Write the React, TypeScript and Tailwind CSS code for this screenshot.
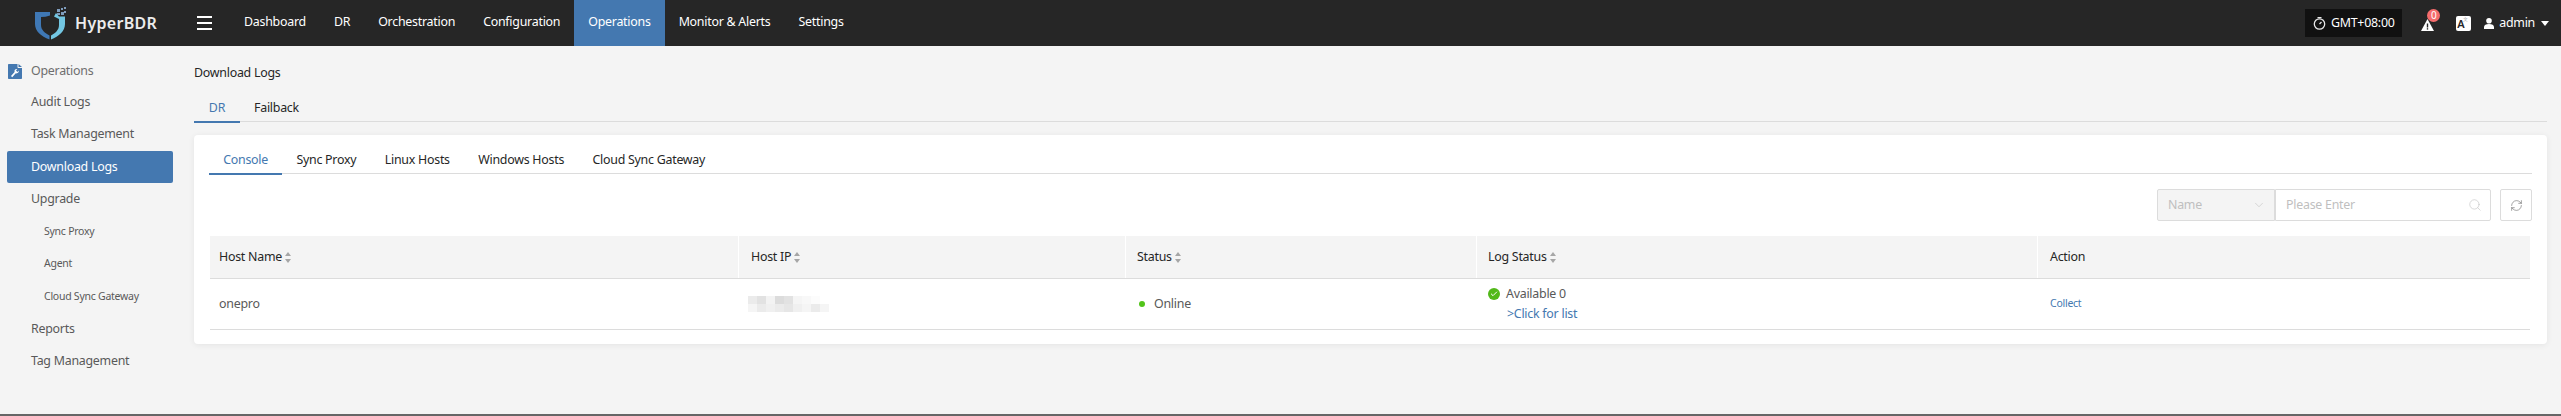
import { ReactNode } from "react"
import { ChevronDown, Search, RefreshCw, Check } from "lucide-react"

const NAV = ["Dashboard", "DR", "Orchestration", "Configuration", "Operations", "Monitor & Alerts", "Settings"]
const SIDE = [
  { label: "Audit Logs" },
  { label: "Task Management" },
  { label: "Download Logs", active: true },
  { label: "Upgrade" },
  { label: "Sync Proxy", sub: true },
  { label: "Agent", sub: true },
  { label: "Cloud Sync Gateway", sub: true },
  { label: "Reports" },
  { label: "Tag Management" },
]
const INNER = ["Console", "Sync Proxy", "Linux Hosts", "Windows Hosts", "Cloud Sync Gateway"]
const BLUR = ["#ebebeb", "#e2e2e2", "#f3f3f3", "#dcdcdc", "#e2e2e2", "#f5f5f5", "#f8f8f8", "#fcfcfc", "#ffffff", "#f5f5f5", "#ebebeb", "#f0f0f0", "#ebebeb", "#e6e6e6", "#f0f0f0", "#f5f5f5", "#ebebeb", "#f5f5f5"]

const Logo = () => (
  <svg width="31" height="33" viewBox="0 0 31 33" className="shrink-0">
    <path d="M0 5 H15 V8.5 C12 9.5 9 10 6 10 V18 C6 23 10 26 14.5 28.5 V32.5 C6 29.5 0 24 0 17 Z" fill="#3f78b5" />
    <path d="M21 6 L24 9.5 H30 V17 C30 24 24 29.5 16 32.5 V28.5 C20.5 26 24 23 24 18 V12 L19 9.5 Z" fill="#72c6e2" />
    <g fill="#7f9dbd">
      <rect x="22" y="2" width="3" height="3" />
      <rect x="26" y="5" width="3" height="3" />
      <rect x="22" y="6" width="3" height="2" />
      <rect x="29" y="0" width="2" height="2" />
      <rect x="26" y="1" width="2" height="2" />
      <rect x="29" y="4" width="2" height="2" />
    </g>
  </svg>
)

const Sort = () => (
  <svg width="6" height="11" viewBox="0 0 6 11" className="ml-[3px] shrink-0" fill="#a6a6a6">
    <path d="M3 0 L6 4 H0 Z" />
    <path d="M3 11 L0 7 H6 Z" />
  </svg>
)

const Th = ({ width, children, sort = true, last = false, pad = "pl-[12px]" }: { width: string; children: ReactNode; sort?: boolean; last?: boolean; pad?: string }) => (
  <div className={`flex h-full items-center ${pad} ${width} ${last ? "flex-1" : "border-r border-white"} text-[#262626]`}>
    {children}
    {sort && <Sort />}
  </div>
)

export default function App() {
  return (
    <div className="flex h-[416px] w-[2561px] flex-col overflow-hidden border-b-2 border-[#666666] bg-[#f4f4f4] font-['Noto_Sans',sans-serif] text-[12.4px] tracking-[-0.25px] text-[#595959]">
      <header className="flex h-[46px] shrink-0 items-center bg-[#262626] text-white">
        <div className="ml-[35px] flex w-[145px] items-center">
          <Logo />
          <span className="ml-[9px] text-[16px] font-semibold tracking-[0.3px] text-[#ececec]">HyperBDR</span>
        </div>
        <div className="ml-[17px] flex w-[15px] flex-col gap-[4px]">
          <span className="h-[2px] bg-white" />
          <span className="h-[2px] bg-white" />
          <span className="h-[2px] bg-white" />
        </div>
        <nav className="ml-[18px] flex h-full">
          {NAV.map((item) => (
            <div key={item} className={`flex h-full items-center px-[14px] pb-[2px] ${item === "Operations" ? "bg-[#4478b0]" : ""}`}>
              {item}
            </div>
          ))}
        </nav>
        <div className="ml-auto flex items-center">
          <div className="flex h-[28px] w-[97px] items-center justify-center gap-[5px] bg-[#111111]">
            <svg width="13" height="13" viewBox="0 0 13 13" fill="none" stroke="#e8e8e8" strokeWidth="1.3">
              <circle cx="6.5" cy="7" r="5.2" />
              <path d="M4.5 0.7 H8.5 M6.5 7 L8.5 5" />
            </svg>
            <span>GMT+08:00</span>
          </div>
          <div className="relative ml-[19px] h-[14px] w-[13px]">
            <svg width="13" height="12" viewBox="0 0 13 12" className="absolute top-[3px]">
              <path d="M6.5 0 L13 12 H0 Z" fill="#ffffff" />
              <rect x="5.8" y="4.5" width="1.4" height="4" fill="#262626" />
              <rect x="5.8" y="9.2" width="1.4" height="1.4" fill="#262626" />
            </svg>
            <span className="absolute left-[6px] top-[-7px] flex h-[13px] w-[13px] items-center justify-center rounded-full bg-[#f56c6c] text-[10px]">0</span>
          </div>
          <div className="ml-[22px] flex h-[15px] w-[15px] items-start justify-start rounded-[2px] bg-white pl-[1px] pt-[2px] text-[11px] font-semibold leading-none text-[#262626]">
            A
            <span className="ml-[-1px] mt-[-1px] text-[5px] font-normal text-[#999999]">文</span>
          </div>
          <svg width="10" height="11" viewBox="0 0 10 11" className="ml-[13px]" fill="#ffffff">
            <circle cx="5" cy="2.8" r="2.8" />
            <path d="M0 11 V9 C0 7 2 6 5 6 C8 6 10 7 10 9 V11 Z" />
          </svg>
          <span className="ml-[5px]">admin</span>
          <svg width="8" height="5" viewBox="0 0 8 5" className="ml-[6px] mr-[12px]" fill="#ffffff">
            <path d="M0 0 H8 L4 5 Z" />
          </svg>
        </div>
      </header>

      <div className="flex min-h-0 flex-1">
        <aside className="w-[194px] shrink-0 pt-[10px]">
          <div className="flex h-[30px] items-center pl-[8px] pt-[1px] text-[#6e6e6e]">
            <svg width="14" height="15" viewBox="0 0 14 15" className="mr-[9px] shrink-0">
              <path d="M1 0 H9.5 V3 C9.5 3.6 9.9 4 10.5 4 H14 V14 C14 14.6 13.6 15 13 15 H1 C0.4 15 0 14.6 0 14 V1 C0 0.4 0.4 0 1 0 Z" fill="#4478b0" />
              <path d="M10.5 0 L14 3 H10.5 Z" fill="#4478b0" />
              <path d="M3 12 L6.6 8 C6 6 7.5 4.6 9.4 5 L8 6.5 L9.4 7.9 L10.8 6.6 C11.1 8.4 9.6 9.9 7.8 9.3 L4.2 13.2 Z" fill="#ffffff" />
            </svg>
            Operations
          </div>
          <ul className="flex flex-col">
            {SIDE.map((item) => (
              <li
                key={item.label}
                className={`ml-[7px] flex h-[32.4px] w-[166px] items-center rounded-[2px] ${item.sub ? "pl-[37px] text-[10.5px]" : "pl-[24px]"} ${item.active ? "bg-[#4478b0] text-white" : ""}`}
              >
                {item.label}
              </li>
            ))}
          </ul>
        </aside>

        <main className="min-w-0 flex-1 pr-[14px]">
          <div className="flex h-[53px] items-center pt-[2px] text-[#262626]">Download Logs</div>
          <div className="flex h-[23px] border-b-[1.5px] border-[#dcdcdc]">
            <div className="-mb-[1.5px] flex w-[46px] items-start justify-center border-b-2 border-[#4478b0] text-[#4478b0]">DR</div>
            <div className="ml-[14px] text-[#262626]">Failback</div>
          </div>
          <section className="mt-[13px] h-[209px] rounded-[4px] bg-white px-[15px] pt-[12px] shadow-[0_1px_6px_rgba(0,0,0,0.07)]">
            <div className="flex h-[27px] border-b-[1.5px] border-[#dcdcdc]">
              {INNER.map((item, i) => (
                <div
                  key={item}
                  className={`-mb-[1.5px] flex items-start px-[14.2px] pt-[4px] ${i === 0 ? "border-b-2 border-[#4478b0] text-[#4478b0]" : "text-[#262626]"}`}
                >
                  {item}
                </div>
              ))}
            </div>
            <div className="mt-[15px] flex h-[32px] justify-end">
              <div className="flex w-[118px] items-center justify-between rounded-l-[2px] border border-[#dcdcdc] bg-[#f4f4f4] pl-[10px] pr-[8px] text-[#bfbfbf]">
                Name
                <ChevronDown size={14} strokeWidth={1} />
              </div>
              <div className="flex w-[216px] items-center justify-between rounded-r-[2px] border border-[#dcdcdc] pl-[10px] pr-[8px] text-[#bfbfbf]">
                Please Enter
                <Search size={14} strokeWidth={1} />
              </div>
              <div className="ml-[9px] flex w-[32px] items-center justify-center rounded-[2px] border border-[#dcdcdc]">
                <RefreshCw size={13} strokeWidth={1} className="text-[#595959]" />
              </div>
            </div>
            <div className="ml-[1px] mr-[2px] mt-[15px]">
              <div className="flex h-[43px] items-center border-b-[1.5px] border-[#dcdcdc] bg-[#f4f4f4]">
                <Th width="w-[529px]" pad="pl-[9px]">Host Name</Th>
                <Th width="w-[387px]">Host IP</Th>
                <Th width="w-[351px]" pad="pl-[11px]">Status</Th>
                <Th width="w-[561px]" pad="pl-[11px]">Log Status</Th>
                <Th width="" sort={false} last>Action</Th>
              </div>
              <div className="flex h-[51px] items-center border-b-[1.5px] border-[#dcdcdc]">
                <div className="w-[529px] pl-[9px]">onepro</div>
                <div className="w-[387px] pl-[9px]">
                  <div className="grid h-[16px] w-[81px] grid-cols-9 grid-rows-2">
                    {BLUR.map((c, i) => (
                      <span key={i} style={{ backgroundColor: c }} />
                    ))}
                  </div>
                </div>
                <div className="flex w-[351px] items-center pl-[13px]">
                  <span className="mr-[9px] h-[6px] w-[6px] rounded-full bg-[#52c41a]" />
                  Online
                </div>
                <div className="w-[561px] pl-[11px] leading-[20px]">
                  <div className="flex items-center">
                    <span className="mr-[6px] flex h-[12px] w-[12px] items-center justify-center rounded-full bg-[#52b81a]">
                      <Check size={8} strokeWidth={3} className="text-white" />
                    </span>
                    Available 0
                  </div>
                  <div className="pl-[19px] text-[#4478b0]">&gt;Click for list</div>
                </div>
                <div className="pl-[12px] text-[10.5px] text-[#4478b0]">Collect</div>
              </div>
            </div>
          </section>
        </main>
      </div>
    </div>
  )
}
